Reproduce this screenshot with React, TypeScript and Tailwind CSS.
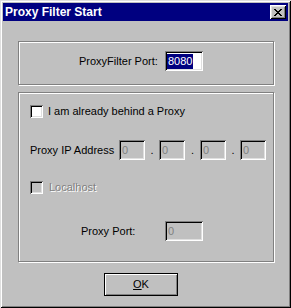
const font = { fontFamily: '"Liberation Sans", Arial, sans-serif' };

const sunken =
  'shadow-[inset_1px_1px_#808080,inset_-1px_-1px_#fff,inset_2px_2px_#000,inset_-2px_-2px_#dfdfdf]';
const raised =
  'shadow-[inset_1px_1px_#fff,inset_-1px_-1px_#000,inset_2px_2px_#dfdfdf,inset_-2px_-2px_#808080]';

function Field({ value, width, disabled }: { value: string; width: number; disabled?: boolean }) {
  return (
    <div
      className={`h-[20px] flex items-center pl-[3px] text-[11px] ${sunken} ${
        disabled ? 'bg-[#c0c0c0] text-[#808080]' : 'bg-white text-black'
      }`}
      style={{ width }}
    >
      {value}
    </div>
  );
}

function Check({ disabled }: { disabled?: boolean }) {
  return <div className={`w-[13px] h-[13px] shrink-0 ${sunken} ${disabled ? 'bg-[#c0c0c0]' : 'bg-white'}`} />;
}

export default function App() {
  return (
    <div
      style={font}
      className="w-[291px] h-[308px] bg-[#c0c0c0] p-[3px] text-[11px] text-black shadow-[inset_1px_1px_#dfdfdf,inset_-1px_-1px_#000,inset_2px_2px_#fff,inset_-2px_-2px_#808080]"
    >
      {/* title bar */}
      <div className="h-[18px] bg-[#000080] flex items-center justify-between pl-[2px] pr-[2px]">
        <span className="text-white font-bold text-[12px] leading-none">Proxy Filter Start</span>
        <div className={`w-[16px] h-[14px] bg-[#c0c0c0] flex items-center justify-center ${raised}`}>
          <svg width="8" height="7" viewBox="0 0 8 7" shapeRendering="crispEdges">
            <path d="M0 0h2v1h-2zM6 0h2v1h-2zM1 1h2v1h-2zM5 1h2v1h-2zM2 2h4v1h-4zM3 3h2v1h-2zM2 4h4v1h-4zM1 5h2v1h-2zM5 5h2v1h-2zM0 6h2v1h-2zM6 6h2v1h-2z" fill="#000" />
          </svg>
        </div>
      </div>

      <div className="ml-[15px] mt-[20px] w-[256px]">
        {/* group 1 */}
        <div className="h-[44px] border border-[#808080] shadow-[inset_1px_1px_#fff,1px_1px_#fff] flex items-start pt-[9px] pl-[60px]">
          <div className="w-[86px] h-[20px] flex items-center">ProxyFilter Port:</div>
          <div className={`w-[38px] h-[20px] bg-white flex items-center pl-[2px] ${sunken}`}>
            <span className="bg-[#000080] text-white px-[1px] leading-[15px]">8080</span>
          </div>
        </div>

        {/* group 2 */}
        <div className="mt-[7px] h-[170px] border border-[#808080] shadow-[inset_1px_1px_#fff,1px_1px_#fff] pl-[11px] pt-[12px]">
          <div className="flex items-center h-[13px]">
            <Check />
            <span className="ml-[5px]">I am already behind a Proxy</span>
          </div>

          <div className="flex items-center mt-[22px] h-[20px]">
            <div className="w-[89px]">Proxy IP Address</div>
            <Field value="0" width={26} disabled />
            <span className="w-[14px] text-center">.</span>
            <Field value="0" width={26} disabled />
            <span className="w-[15px] text-center">.</span>
            <Field value="0" width={26} disabled />
            <span className="w-[14px] text-center">.</span>
            <Field value="0" width={26} disabled />
          </div>

          <div className="flex items-center mt-[21px] h-[13px]">
            <Check disabled />
            <span className="ml-[6px] text-[#808080] [text-shadow:1px_1px_0_#fff]">Localhost</span>
          </div>

          <div className="flex items-center mt-[27px] h-[20px]">
            <div className="ml-[51px] w-[84px]">Proxy Port:</div>
            <Field value="0" width={38} disabled />
          </div>
        </div>
      </div>

      {/* OK button */}
      <div className="ml-[101px] mt-[11px] w-[74px] h-[23px] border border-black">
        <div className="w-full h-full flex items-center justify-center shadow-[inset_1px_1px_#fff,inset_-1px_-1px_#808080]">
          <span>
            <span className="underline">O</span>K
          </span>
        </div>
      </div>
    </div>
  );
}
